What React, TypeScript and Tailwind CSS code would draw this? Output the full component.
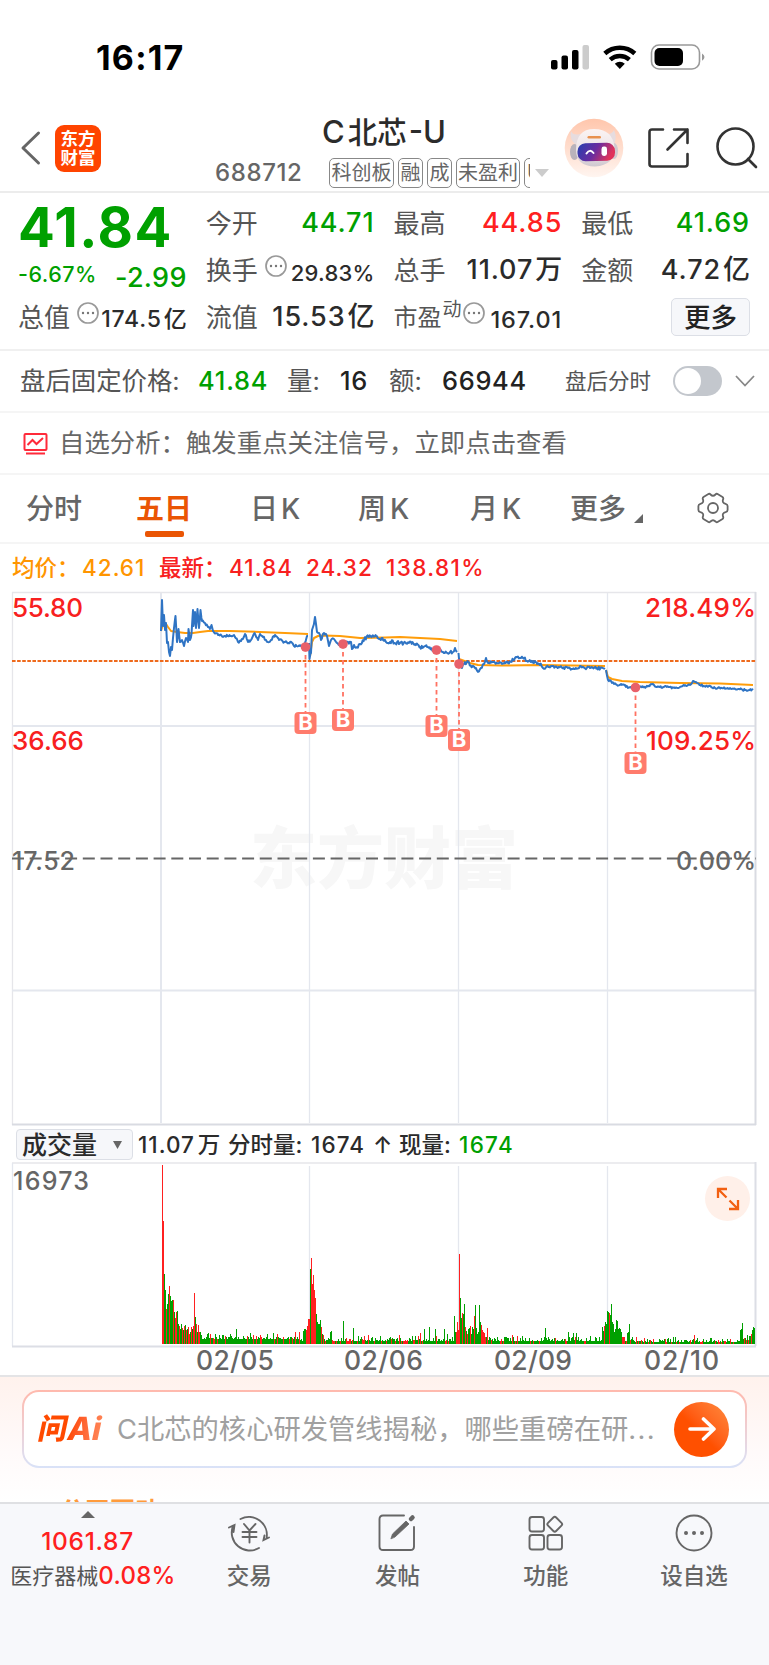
import type { ReactNode } from 'react';

type Pt = [number, number];

// price per minute, one series per trading day
const priceDays: { amp: number; pts: Pt[] }[] = [
  { amp: 1.3, pts: [[161, 41], [162, 10], [163, 36], [164, 25], [165, 40], [166, 33], [167, 53], [168, 52], [169, 62], [170, 66], [171, 57], [172, 60], [173, 48], [174, 38], [175.5, 26], [177, 52], [178.5, 39], [180, 52], [182, 50], [184, 56], [186, 48], [188, 52], [188.5, 39], [190, 50], [191.5, 44], [193, 20], [193.5, 36], [195, 22], [196, 38], [197.5, 19], [199, 38], [200.5, 20], [202, 31], [205, 33], [208, 37], [210, 39], [211.5, 35], [213, 41], [218, 45], [225, 46], [230, 46], [234, 45], [238, 52], [241, 51], [245, 44], [248, 52], [251, 50], [254.5, 43], [258, 50], [260, 44], [263, 47], [266, 50], [268, 52], [271, 50], [275, 45], [279, 50], [285, 52], [290, 52], [294, 56], [300, 56], [304, 57], [307, 46], [308, 46]] },
  { amp: 2, pts: [[309, 53], [309.5, 69], [311, 63], [312, 40], [313, 37], [315, 27], [316, 34], [317, 42], [319, 43], [321, 50], [324, 43], [327, 46], [329, 56], [331, 50], [334, 49], [337, 53], [341, 54], [345, 54], [348, 52], [351, 52], [352, 59], [354, 55], [357, 57], [360, 54], [364, 50], [368, 46], [372, 46], [376, 46], [379, 49], [383, 50], [386, 52], [390, 52], [400, 53], [409, 53], [415, 54], [420, 57], [427, 57], [436, 60], [443, 62], [450, 62], [453, 62], [455, 58], [457, 62]] },
  { amp: 1.6, pts: [[458.5, 63], [459.5, 74], [462, 78], [464, 74], [468, 72], [472, 77], [476, 78], [478, 82], [481, 78], [484, 74], [486, 68], [488, 73], [492, 72], [497, 73], [502, 74], [508, 73], [513, 70], [517, 67], [520, 68], [524, 68], [527, 71], [533, 71], [537, 74], [541, 74], [543, 78], [549, 77], [555, 77], [560, 77], [568, 78], [574, 79], [580, 76], [585, 78], [590, 78], [597, 78], [605, 79]] },
  { amp: 1, pts: [[606, 80], [608, 90], [611, 91], [614, 94], [617, 95], [621, 94], [625, 95], [628, 98], [634, 97], [640, 97], [646, 97], [650, 95], [653, 94], [657, 97], [663, 97], [669, 97], [675, 98], [680, 97], [685, 95], [690, 95], [693, 91], [695, 92], [700, 95], [707, 96], [715, 98], [730, 98], [738, 99], [745, 100], [753, 100]] },
];

const avgDays = [
  'M161 41L163 34L166 34L168 37L171 41L177 42L185 43L193 43L200 42L208 41L230 41L260 42L285 43L308 44',
  'M310 66L312 52L314 48L318 46L324 45.5L340 46L360 48L385 47.5L400 47L420 48L440 49L457 51',
  'M459 69L470 73L478 75L500 75.5L540 75L605 76',
  'M606 80L608 87L612 89L622 91L640 92L680 93L720 93.5L753 95',
];

const buys = [
  { x: 305.5, y: 57, box: 122 },
  { x: 343, y: 54, box: 119 },
  { x: 436.5, y: 60, box: 125 },
  { x: 459, y: 74, box: 139 },
  { x: 635.5, y: 97.5, box: 162 },
];

// [x, height, up]
const volSpikes: [number, number, number][] = [
  [162, 106, 1], [163, 123, 1], [164, 70, 0], [165, 54, 0], [166, 35, 1], [167, 40, 0], [168, 50, 0], [169, 58, 1], [170, 48, 0], [171, 43, 0], [172, 44, 0], [173, 44, 1], [174, 32, 0], [175, 26, 1], [176, 32, 1], [177, 33, 0], [178, 20, 0], [179, 18, 1], [180, 15, 0], [181, 20, 0], [182, 16, 1], [183, 14, 0], [184, 18, 1], [185, 19, 0], [186, 14, 1], [187, 15, 0], [188, 17, 1], [189, 10, 1], [190, 12, 0], [191, 17, 1], [192, 15, 0], [193, 18, 1], [194, 51, 1], [195, 27, 0], [196, 20, 1], [197, 12, 0], [198, 19, 1], [199, 12, 1], [200, 12, 0], [201, 9, 0],
  [208, 11, 0], [210, 10, 1], [215, 10, 0], [223, 9, 0], [230, 10, 0], [236, 15, 0], [247, 8, 1], [250, 11, 0], [260, 9, 1], [267, 10, 0], [273, 11, 0], [277, 10, 1], [283, 7, 1], [295, 12, 1], [299, 12, 1], [303, 13, 0], [304, 15, 0], [305, 15, 0], [306, 14, 1], [307, 18, 1], [308, 25, 1], [309, 25, 1], [310, 75, 0], [311, 86, 1], [312, 60, 1], [313, 69, 1], [314, 54, 1], [315, 46, 1], [316, 30, 0], [317, 22, 0], [318, 20, 0], [319, 20, 0], [320, 24, 0], [321, 17, 1], [322, 10, 0], [323, 9, 1],
  [330, 12, 0], [331, 13, 0], [343, 23, 0], [353, 16, 0], [358, 8, 0], [368, 9, 1], [399, 9, 1], [418, 8, 1], [420, 11, 1], [424, 15, 0], [429, 17, 0], [435, 15, 0], [444, 15, 0], [447, 10, 0], [454, 28, 0], [455, 12, 0], [456, 12, 1], [457, 22, 1], [458, 14, 1], [459, 90, 1], [460, 46, 0], [461, 26, 0], [462, 31, 1], [463, 30, 0], [464, 40, 0], [465, 17, 1], [466, 13, 0], [467, 10, 1], [468, 15, 0], [469, 16, 0], [470, 18, 1], [471, 10, 0], [472, 17, 0], [473, 15, 0], [474, 28, 1], [475, 39, 0], [476, 16, 0], [477, 10, 0], [478, 12, 0], [479, 39, 0], [480, 22, 0], [481, 19, 1], [482, 14, 1], [483, 12, 1], [484, 11, 1], [485, 7, 1], [487, 16, 1],
  [512, 9, 1], [517, 8, 1], [545, 16, 0], [548, 7, 0], [568, 12, 0], [573, 11, 0], [576, 11, 0], [590, 8, 0], [595, 7, 0], [602, 17, 0], [603, 13, 0], [604, 18, 1], [605, 22, 0], [606, 20, 0], [607, 33, 0], [608, 32, 0], [609, 31, 1], [610, 29, 0], [611, 40, 0], [612, 22, 0], [613, 20, 0], [614, 12, 0], [615, 15, 0], [616, 24, 0], [617, 23, 0], [618, 15, 0], [619, 16, 0], [620, 15, 0], [621, 12, 0], [622, 7, 1], [623, 7, 1], [627, 11, 0], [628, 12, 0], [629, 20, 0], [632, 7, 0],
  [653, 5, 1], [675, 7, 0], [694, 9, 1], [697, 6, 0], [710, 6, 0], [722, 5, 0], [740, 14, 0], [741, 15, 0], [742, 21, 0], [745, 6, 0], [749, 8, 0], [751, 10, 1], [752, 14, 0], [753, 17, 0], [754, 16, 0],
];

const noise = (n: number) => {
  const v = Math.sin(n * 127.1 + 11.7) * 43758.5453;
  return v - Math.floor(v);
};

const pricePath = ({ amp, pts }: { amp: number; pts: Pt[] }) => {
  let d = `M${pts[0][0]} ${pts[0][1]}`;
  for (let i = 1; i < pts.length; i++) {
    const [x0, y0] = pts[i - 1];
    const [x1, y1] = pts[i];
    for (let x = x0 + 0.9; x < x1 - 0.4; x += 0.9) {
      const y = y0 + ((y1 - y0) * (x - x0)) / (x1 - x0) + (noise(x) - 0.5) * 2 * amp;
      d += `L${x.toFixed(1)} ${y.toFixed(1)}`;
    }
    d += `L${x1} ${y1}`;
  }
  return d;
};

const volumeBars = () => {
  const bars = new Map<number, { h: number; up: boolean }>();
  for (let x = 164; x < 755; x++) {
    const base = x < 300 ? 4.5 : x > 633 && x < 738 ? 1.6 : 2.6;
    bars.set(x, { h: base + noise(x) * noise(x + 3) * 6.5, up: noise(x * 1.7) > 0.75 });
  }
  volSpikes.forEach(([x, h, up]) => bars.set(x, { h, up: up === 1 }));
  return [...bars.entries()];
};

const gridX = [161, 309.5, 458.5, 607.5];

function Dots() {
  return (
    <svg className="h-[22px] w-[22px] shrink-0" viewBox="0 0 22 22" fill="none">
      <circle cx="11" cy="11" r="10" stroke="#999" strokeWidth="1.7" />
      <path d="M6 11h.01M11 11h.01M16 11h.01" stroke="#777" strokeWidth="2.4" strokeLinecap="round" />
    </svg>
  );
}

function Stat({ label, value, unit, color = 'text-[#2b2b2b]' }: { label: string; value: string; unit?: string; color?: string }) {
  return (
    <div className="flex h-[47px] items-center justify-between">
      <span className="text-[26px] text-[#555]">{label}</span>
      <span className={`text-[27px] font-medium tracking-[0.9px] ${color}`}>
        {value}
        {unit && <span className="ml-[2px] tracking-[0px]">{unit}</span>}
      </span>
    </div>
  );
}

function StatusBar() {
  return (
    <div className="flex h-[112px] items-start justify-between pr-[63px] pl-[96px] pt-[37px]">
      <span className="text-[34px] leading-[42px] font-bold tracking-[1.2px] text-black">16:17</span>
      <svg className="mt-[5px] h-[32px] w-[156px]" viewBox="550 42 156 32">
        <rect x="551" y="60" width="6.5" height="9.5" rx="2" />
        <rect x="561.5" y="55.5" width="6.5" height="14" rx="2" />
        <rect x="572" y="50" width="6.5" height="19.5" rx="2" />
        <rect x="582.5" y="45" width="6.5" height="24.5" rx="2" fill="#ccc" />
        <path d="M604.8 53.5A22.5 22.5 0 0 1 634.8 53.5" fill="none" stroke="#000" strokeWidth="4.6" />
        <path d="M610.2 59.6A14.4 14.4 0 0 1 629.4 59.6" fill="none" stroke="#000" strokeWidth="4.4" />
        <path d="M619.8 69L614.8 63.8A7.3 7.3 0 0 1 624.8 63.8Z" />
        <rect x="651.5" y="45" width="48" height="24" rx="7.5" fill="none" stroke="#999" strokeWidth="1.6" />
        <rect x="654.5" y="48" width="28.5" height="18" rx="5" />
        <path d="M702 53.5Q704.5 55 704.5 57T702 60.8Z" fill="#999" />
      </svg>
    </div>
  );
}

function Robot() {
  return (
    <svg className="h-[60px] w-[60px]" viewBox="0 0 60 60">
      <defs>
        <linearGradient id="halo" x1="0" y1="0" x2="0" y2="1">
          <stop offset="0" stopColor="#ffc6ac" />
          <stop offset="1" stopColor="#fff5f0" />
        </linearGradient>
        <linearGradient id="visor" x1="0" y1="0" x2="1" y2="0.3">
          <stop offset="0" stopColor="#2440b0" />
          <stop offset="0.55" stopColor="#6a2ca0" />
          <stop offset="1" stopColor="#e0335a" />
        </linearGradient>
        <linearGradient id="shell" x1="0" y1="0" x2="0" y2="1">
          <stop offset="0" stopColor="#fbf3f2" />
          <stop offset="0.6" stopColor="#ebe4e8" />
          <stop offset="1" stopColor="#cfc8cf" />
        </linearGradient>
      </defs>
      <circle cx="30" cy="30" r="29.3" fill="url(#halo)" />
      <path d="M7 13Q9 18 16 16L20 20L12 27Q5 21 7 13ZM50 12Q48 17 41 16L40 20L49 27Q54 21 50 12Z" fill="#e6dcdf" />
      <ellipse cx="10.5" cy="34" rx="4.5" ry="8" fill="#b9b3bb" />
      <ellipse cx="50" cy="33" rx="4" ry="8" fill="#d0c9cf" />
      <path d="M12 32Q12 11 30 11Q49 11 50.5 30Q51 47 31 48.5Q12 48 12 32Z" fill="url(#shell)" />
      <rect x="13.5" y="25" width="37.5" height="18" rx="8" fill="url(#visor)" transform="rotate(-1.5 32 34)" />
      <path d="M22.5 35.5Q26 30.5 29.5 35" fill="none" stroke="#fff" strokeWidth="2" strokeLinecap="round" />
      <rect x="37.5" y="28.5" width="5.5" height="9.5" rx="2.4" fill="#fff" />
      <rect x="23.5" y="18" width="13.5" height="2.6" rx="1.3" fill="#e8914f" />
    </svg>
  );
}

function Header() {
  return (
    <header className="flex h-[81px] border-b-2 border-[#ececec]">
      <div className="flex w-[215px] items-center gap-[14px] pl-[20px] pb-[8px] pt-[1px]">
        <svg className="h-[36px] w-[21px]" viewBox="0 0 21 36" fill="none" stroke="#666" strokeWidth="3" strokeLinecap="round" strokeLinejoin="round">
          <path d="M18.5 3L3 18L18.5 33" />
        </svg>
        <div className="flex h-[47px] w-[46px] flex-col items-center justify-center rounded-[9px] bg-[#ff4400] text-[17.5px] leading-[19px] font-bold text-white">
          <span>东方</span>
          <span>财富</span>
        </div>
      </div>
      <div className="flex w-[339px] flex-col">
        <h1 className="flex h-[40px] items-center pl-[107px] text-[31px] font-medium text-[#2b2b2b]">
          <span>C</span>
          <span className="mr-[2px] ml-[3px] text-[29.5px]">北芯</span>
          <span>-U</span>
        </h1>
        <div className="mt-[6px] flex h-[30px] items-center">
          <span className="w-[114px] text-[24px] font-medium tracking-[0.6px] text-[#666]">688712</span>
          <div className="flex w-[201px] gap-[4px] overflow-hidden text-[20px] leading-[26px] text-[#666]">
            {[
              ['科创板', 'w-[65px]'],
              ['融', 'w-[25px]'],
              ['成', 'w-[25px]'],
              ['未盈利', 'w-[64px]'],
            ].map(([tag, w]) => (
              <span key={tag} className={`flex h-[30px] shrink-0 items-center justify-center rounded-[5px] border border-[#888] whitespace-nowrap ${w}`}>
                {tag}
              </span>
            ))}
            <span className="h-[30px] w-[25px] shrink-0 rounded-[5px] border border-[#888] pl-[2px]">U</span>
          </div>
          <svg className="ml-[5px] h-[8px] w-[14px]" viewBox="0 0 14 8">
            <path d="M0 0H14L7 8Z" fill="#ccc" />
          </svg>
        </div>
      </div>
      <div className="flex flex-1 items-center pb-[8px] pl-[10px]">
        <Robot />
        <svg className="ml-[24px] h-[42px] w-[42px]" viewBox="0 0 42 42" fill="none" stroke="#333" strokeWidth="2.6" strokeLinecap="round" strokeLinejoin="round">
          <path d="M15 2.5H4Q1.5 2.5 1.5 5V37Q1.5 39.5 4 39.5H37Q39.5 39.5 39.5 37V27M26 2.5H39.5V16M39.5 2.5L19.5 22.5" />
        </svg>
        <svg className="ml-[26px] h-[42px] w-[42px] shrink-0" viewBox="0 0 42 42" fill="none" stroke="#333" strokeWidth="2.6" strokeLinecap="round">
          <circle cx="19.5" cy="19.5" r="18" />
          <path d="M32 32L40 40" />
        </svg>
      </div>
    </header>
  );
}

function Quote() {
  return (
    <section className="grid h-[158px] grid-cols-4 gap-x-[19px] border-b-2 border-[#f0f0f0] pt-[7px] pr-[19px] pl-[18px] whitespace-nowrap">
      <div>
        <div className="flex h-[55px] items-center text-[54.5px] font-bold tracking-[1.5px] text-[#00a000]">41.84</div>
        <div className="flex h-[39px] items-center justify-between font-medium text-[#00a000]">
          <span className="text-[21.5px] tracking-[0.5px]">-6.67%</span>
          <span className="mt-[7px] text-[27px] tracking-[0.3px]">-2.99</span>
        </div>
        <div className="flex h-[47px] items-center">
          <span className="text-[26px] text-[#555]">总值</span>
          <span className="mb-[9px] ml-[7px]"><Dots /></span>
          <span className="mt-[4px] ml-auto text-[23px] font-medium tracking-[0.8px] text-[#2b2b2b]">174.5<span className="ml-[2px] tracking-[0px]">亿</span></span>
        </div>
      </div>
      <div>
        <Stat label="今开" value="44.71" color="text-[#00a000]" />
        <div className="flex h-[47px] items-center">
          <span className="text-[26px] text-[#555]">换手</span>
          <span className="mb-[9px] ml-[7px]"><Dots /></span>
          <span className="mt-[6px] ml-auto text-[22px] font-medium tracking-[0.2px] text-[#2b2b2b]">29.83%</span>
        </div>
        <Stat label="流值" value="15.53" unit="亿" />
      </div>
      <div>
        <Stat label="最高" value="44.85" color="text-[#ff2020]" />
        <Stat label="总手" value="11.07" unit="万" />
        <div className="flex h-[47px] items-center">
          <span className="text-[24px] text-[#555]">市盈</span>
          <span className="mb-[14px] ml-px text-[19px] text-[#555]">动</span>
          <span className="mb-[9px] ml-[1px]"><Dots /></span>
          <span className="mt-[4px] ml-auto text-[23.5px] font-medium tracking-[0.9px] text-[#2b2b2b]">167.01</span>
        </div>
      </div>
      <div>
        <Stat label="最低" value="41.69" color="text-[#00a000]" />
        <Stat label="金额" value="4.72" unit="亿" />
        <div className="-mt-px flex h-[47px] items-center justify-end">
          <button className="h-[38px] w-[79px] rounded-[5px] border border-[#dcdfe6] bg-[#f6f7fa] text-[26.5px] leading-[34px] font-medium text-[#222]">更多</button>
        </div>
      </div>
    </section>
  );
}

function AfterHours() {
  return (
    <section className="flex h-[62px] items-center border-b-2 border-[#f5f5f5] pl-[20px] text-[25.4px] whitespace-nowrap text-[#555]">
      <span className="w-[178px]">盘后固定价格:</span>
      <span className="w-[89px] font-medium tracking-[0.8px] text-[#00a000]">41.84</span>
      <span className="w-[53px]">量:</span>
      <span className="w-[49px] font-medium tracking-[0.6px] text-[#222]">16</span>
      <span className="w-[53px]">额:</span>
      <span className="w-[123px] font-medium tracking-[0.7px] text-[#222]">66944</span>
      <span className="w-[108px] text-[21.5px]">盘后分时</span>
      <span className="flex h-[30px] w-[49px] rounded-full bg-[#c3c7cd] p-[2px]">
        <span className="h-[26px] w-[26px] rounded-full bg-white" />
      </span>
      <svg className="ml-[13px] h-[12px] w-[20px]" viewBox="0 0 20 12" fill="none" stroke="#888" strokeWidth="1.8">
        <path d="M1 1L10 10.5L19 1" />
      </svg>
    </section>
  );
}

function Analysis() {
  return (
    <section className="flex h-[62px] items-center border-b-2 border-[#f5f5f5] pt-px pl-[23px] text-[25.4px] text-[#666]">
      <svg className="mr-[11px] h-[24px] w-[25px]" viewBox="0 0 25 24" fill="none" stroke="#ff2a3a" strokeWidth="2">
        <rect x="1.5" y="2" width="22" height="16" rx="1" />
        <path d="M4.5 13L9.5 8L13.5 12L20 6M3 21.5H22" />
      </svg>
      自选分析：触发重点关注信号，立即点击查看
    </section>
  );
}

function Tabs() {
  return (
    <nav className="flex h-[69px] items-center border-b-2 border-[#f5f5f5] pt-px pl-[26px] text-[28px] font-medium whitespace-nowrap text-[#666]">
      <span className="w-[110px]">分时</span>
      <span className="relative w-[114px] font-bold text-[#ea5504]">
        五日
        <span className="absolute top-[43px] left-[9px] h-[6px] w-[39px] rounded-[2px] bg-[#ea5504]" />
      </span>
      <span className="w-[108px]">日<span className="ml-[3px]">K</span></span>
      <span className="w-[112px]">周<span className="ml-[4px]">K</span></span>
      <span className="w-[100px]">月<span className="ml-[4px]">K</span></span>
      <span className="w-[64px]">更多</span>
      <svg className="mt-[18px] h-[9px] w-[9px]" viewBox="0 0 9 9"><path d="M9 0V9H0Z" fill="#666" /></svg>
      <svg className="mb-[2px] ml-[53px] h-[34px] w-[34px]" viewBox="0 0 34 34" fill="none" stroke="#666" strokeWidth="1.8" strokeLinejoin="round">
        <path d="M12 3.2Q13.6 2.2 14.5 3.5Q17 6 19.5 3.5Q20.4 2.2 22 3.2L26.5 6Q27.8 7 27 8.6Q26 12 29.6 12.8Q31.6 13.4 31.6 15V19Q31.6 20.6 29.6 21.2Q26 22 27 25.4Q27.8 27 26.5 28L22 30.8Q20.4 31.8 19.5 30.5Q17 28 14.5 30.5Q13.6 31.8 12 30.8L7.5 28Q6.2 27 7 25.4Q8 22 4.4 21.2Q2.4 20.6 2.4 19V15Q2.4 13.4 4.4 12.8Q8 12 7 8.6Q6.2 7 7.5 6Z" />
        <circle cx="17" cy="17" r="5" />
      </svg>
    </nav>
  );
}

function PriceChart() {
  return (
    <svg className="block h-[536px] w-full" viewBox="0 0 769 536" fontFamily="Inter, sans-serif" fontSize="26" fontWeight="500">
      <text x="250" y="293" fontSize="67" fontWeight="900" fill="#f7f7f7" fontFamily="Noto Sans CJK SC, sans-serif">东方财富</text>
      <g stroke="#e4e7ee" strokeWidth="2">
        {gridX.map((x) => <path key={x} d={`M${x} 3V533`} strokeWidth={x % 1 ? 1.3 : 2} />)}
        <path d="M12 2.5H756M12.5 2V535" stroke="#e6e6ea" strokeWidth="1.3" />
        <path d="M12 136H756M12 400.5H756" />
        <path d="M12 534.5H756M755.5 2V535" stroke="#d9dbe2" />
      </g>
      <path d="M12 268.5H756" stroke="#666" strokeWidth="2" strokeDasharray="12 5.7" />
      <path d="M12 71H756" stroke="#ee6a1c" strokeWidth="2" strokeDasharray="3.6 1.5" />
      <g fill="none" strokeLinejoin="round">
        {avgDays.map((d) => <path key={d} d={d} stroke="#ff9d0a" strokeWidth="2" />)}
        {priceDays.map((day) => <path key={day.pts[0][0]} d={pricePath(day)} stroke="#2f74c4" strokeWidth="2" />)}
      </g>
      <g fill="#f82020">
        <text x="12" y="27" textLength="71">55.80</text>
        <text x="12" y="160" textLength="72">36.66</text>
        <text x="645" y="27" textLength="111">218.49%</text>
        <text x="646" y="160" textLength="110">109.25%</text>
      </g>
      <g fill="#666" fontSize="25">
        <text x="12" y="280" textLength="63">17.52</text>
        <text x="676" y="280" textLength="80">0.00%</text>
      </g>
      {buys.map((b) => (
        <g key={b.x}>
          <path d={`M${b.x} ${b.y}V${b.box}`} stroke="#ff7262" strokeWidth="1.8" strokeDasharray="4.5 3.5" />
          <circle cx={b.x} cy={b.y} r="4.8" fill="#e8606a" />
          <rect x={b.x - 11} y={b.box} width="22" height="22" rx="4" fill="#ff7b6c" />
          <text x={b.x - 7.3} y={b.box + 18.3} fontSize="21" textLength="14.6" lengthAdjust="spacingAndGlyphs" fontWeight="700" fill="#fff">B</text>
        </g>
      ))}
    </svg>
  );
}

function VolumeChart() {
  return (
    <div className="relative">
      <svg className="block h-[213px] w-full" viewBox="0 0 769 213" fontFamily="Inter, sans-serif" fontSize="26.5" fontWeight="500" fill="#666">
        <path d="M12 1H756" stroke="#ececef" strokeWidth="2" />
        <path d="M12.5 1V184M309.5 4V182M458.5 4V182M607.5 4V182" stroke="#e4e7ee" strokeWidth="1.3" />
        <path d="M12 184.5H756M755.5 0V184" stroke="#dcdee5" strokeWidth="2" />
        <g shapeRendering="crispEdges">
          {volumeBars().map(([x, { h, up }]) => (
            <rect key={x} x={x} y={182 - h} width="1" height={h} fill={up ? '#ff2020' : '#00a000'} />
          ))}
          <rect x="162" y="3" width="1" height="179" fill="#ff2020" />
        </g>
        <text x="13" y="28" textLength="76" fontSize="25">16973</text>
        <text x="196" y="208" textLength="78">02/05</text>
        <text x="344" y="208" textLength="79">02/06</text>
        <text x="494" y="208" textLength="78">02/09</text>
        <text x="644" y="208" textLength="75">02/10</text>
      </svg>
      <button className="absolute top-[14px] right-[19px] flex h-[45px] w-[45px] items-center justify-center rounded-full bg-[#fff0e9]">
        <svg className="h-[24px] w-[24px]" viewBox="0 0 24 24" fill="none" stroke="#f26012" strokeWidth="2.3">
          <path d="M2 11V2H11M2 2L10.5 10.5M22 13V22H13M22 22L13.5 13.5" />
        </svg>
      </button>
    </div>
  );
}

function AskAi() {
  return (
    <section className="relative h-[127px] overflow-hidden border-t-2 border-[#e4e4e6] bg-linear-to-b from-[#fff2ed] via-[#fffafa] via-60% to-white px-[22px] pt-[13px]">
      <div className="h-[78px] rounded-[17px] bg-linear-to-b from-[#ffb9ad] to-[#d9e2f8] p-[2px]">
        <div className="flex h-full items-center rounded-[15px] bg-white pl-[15px]">
          <span className="flex w-[78px] -skew-x-12 items-center bg-linear-to-r from-[#ff4a00] from-40% to-[#ff9c70] bg-clip-text text-[32px] leading-[40px] font-extrabold tracking-[0px] text-transparent">
            <span className="text-[29px] font-black">问</span>Ai
          </span>
          <span className="flex-1 pt-[2px] text-[27.3px] whitespace-nowrap text-[#a0a0a0]">C北芯的核心研发管线揭秘，哪些重磅在研<span className="tracking-[1.4px]">...</span></span>
          <span className="mr-[16px] flex h-[55px] w-[55px] items-center justify-center rounded-full bg-linear-to-tr from-[#ff5000] from-45% to-[#ff8a3c]">
            <svg className="h-[26px] w-[28px]" viewBox="0 0 28 26" fill="none" stroke="#fff" strokeWidth="3.6" strokeLinecap="round" strokeLinejoin="round">
              <path d="M2 13H26M15.5 3L26 13L15.5 23" />
            </svg>
          </span>
        </div>
      </div>
      <div className="mt-[30px] ml-[38px] text-[25px] leading-[27px] font-bold text-[#ff9b3c]">公司要动</div>
    </section>
  );
}

function TabItem({ label, children }: { label: string; children: ReactNode }) {
  return (
    <div className="flex w-[148.3px] flex-col items-center">
      <svg className="mt-[8px] h-[42px] w-[44px]" viewBox="0 0 44 42" fill="none" stroke="#666" strokeWidth="1.9" strokeLinecap="round">
        {children}
      </svg>
      <span className="mt-[7px] text-[22.5px] leading-[30px] font-medium text-[#666]">{label}</span>
    </div>
  );
}

function BottomBar() {
  return (
    <footer className="flex h-[163px] border-t-2 border-[#dfe0e3] bg-[#f7f8fb] whitespace-nowrap">
      <div className="flex w-[175px] flex-col items-center pt-[7px]">
        <svg className="h-[7px] w-[14px]" viewBox="0 0 14 7"><path d="M7 0L14 7H0Z" fill="#666" /></svg>
        <span className="mt-[8px] text-[24.5px] leading-[30px] font-medium tracking-[0.7px] text-[#ff2020]">1061.87</span>
        <span className="mt-[5px] pl-[11px] text-[22px] leading-[30px] text-[#555]">
          医疗器械<span className="text-[24px] font-medium tracking-[0.3px] text-[#ff2020]">0.08%</span>
        </span>
      </div>
      <TabItem label="交易">
        <path d="M13.5 7A18 18 0 0 1 39.5 26.5M42 25.5L36.5 28L37.5 23.5M32 36A18 18 0 0 1 6 14M2 15.5L7.5 13L6.5 20M17 12L22.5 18.5L28.5 12M15.5 20H29.5M15.5 25H29.5M22.5 19V30.5" />
      </TabItem>
      <TabItem label="发帖">
        <path d="M29 3.5H8Q4.5 3.5 4.5 7V34.5Q4.5 38 8 38H35.5Q39 38 39 34.5V15" />
        <path d="M16 26.5L17.5 22L31 9L34 12L20 25Z" fill="#666" strokeWidth="0.8" />
        <path d="M36 7L37.5 5.5" strokeWidth="4.5" />
      </TabItem>
      <TabItem label="功能">
        <rect x="5.5" y="5" width="14.5" height="14.5" rx="2.5" />
        <rect x="5.5" y="23" width="14.5" height="14.5" rx="2.5" />
        <rect x="23.5" y="23" width="14.5" height="14.5" rx="2.5" />
        <rect x="25" y="6.5" width="11.5" height="11.5" rx="2" transform="rotate(45 30.75 12.25)" />
      </TabItem>
      <TabItem label="设自选">
        <circle cx="22" cy="21" r="17.5" />
        <path d="M14 21h.01M22 21h.01M30 21h.01" strokeWidth="4" />
      </TabItem>
    </footer>
  );
}

export default function App() {
  return (
    <div className="h-[1665px] w-[769px] overflow-hidden bg-white font-['Inter','Noto_Sans_CJK_SC',sans-serif]">
      <StatusBar />
      <Header />
      <Quote />
      <AfterHours />
      <Analysis />
      <Tabs />
      <div className="flex h-[46px] items-center pt-[2px] pl-[12px] text-[22.5px] font-medium whitespace-nowrap text-[#f82020]">
        <span className="w-[70px] text-[#ff9500]">均价：</span>
        <span className="w-[77px] tracking-[1px] text-[#ff9500]">42.61</span>
        <span className="w-[70px]">最新：</span>
        <span className="w-[77px] tracking-[1.1px]">41.84</span>
        <span className="w-[80px] tracking-[1px]">24.32</span>
        <span className="tracking-[1.4px]">138.81%</span>
      </div>
      <PriceChart />
      <div className="flex h-[36px] items-center pt-px pl-[16px] text-[22.5px] font-medium whitespace-nowrap text-[#2b2b2b]">
        <button className="flex h-[31px] w-[117px] items-center justify-between rounded-[4px] border border-[#dcdfe6] bg-[#f6f7fa] pr-[10px] pl-[5px] text-[25px] leading-[28px]">
          成交量
          <svg className="h-[8px] w-[9px]" viewBox="0 0 9 8"><path d="M0 0H9L4.5 8Z" fill="#666" /></svg>
        </button>
        <span className="ml-[5px] w-[90px] tracking-[1px]">11.07<span className="ml-[3px]">万</span></span>
        <span className="w-[83px]">分时量:</span>
        <span className="w-[62px] tracking-[1.1px]">1674</span>
        <span className="w-[26px]">↑</span>
        <span className="w-[60px]">现量:</span>
        <span className="tracking-[1.3px] text-[#00a000]">1674</span>
      </div>
      <VolumeChart />
      <AskAi />
      <BottomBar />
    </div>
  );
}
